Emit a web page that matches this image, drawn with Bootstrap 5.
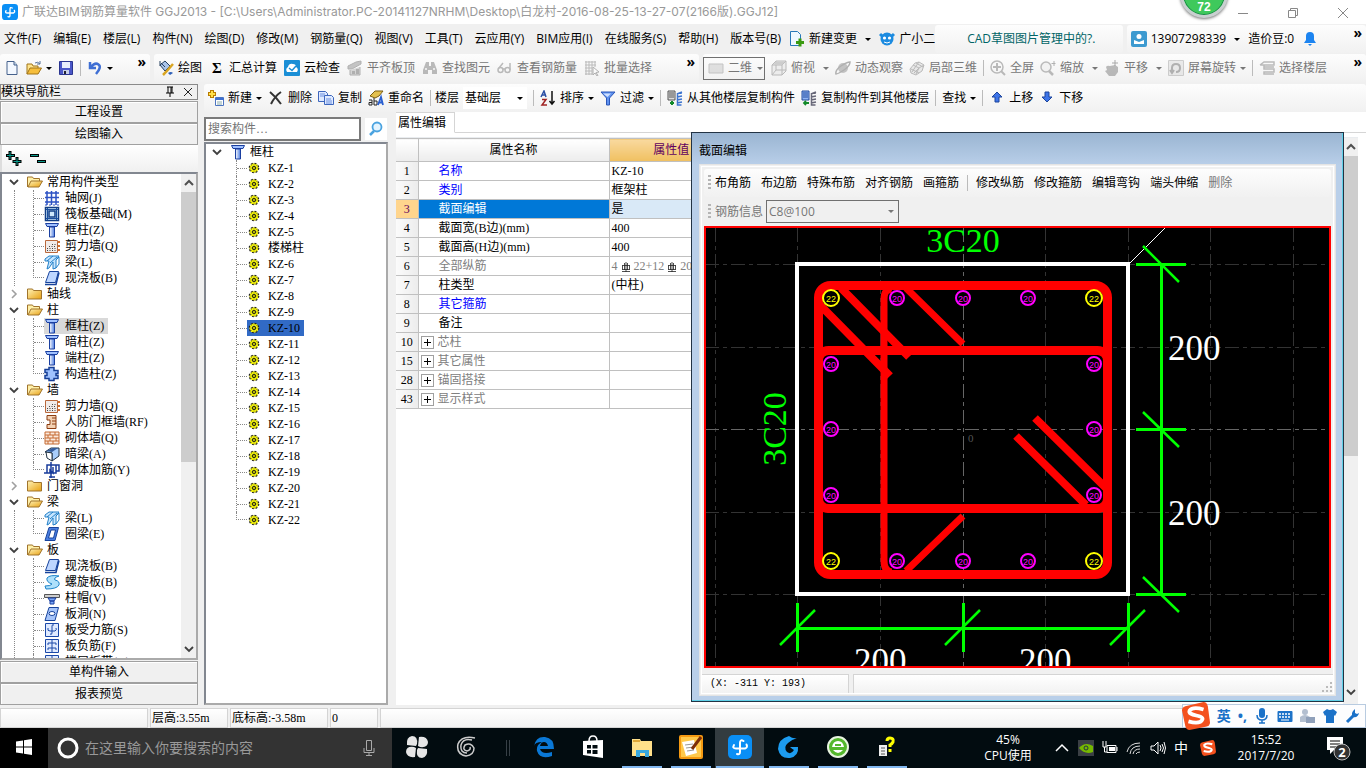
<!DOCTYPE html>
<html lang="zh-CN">
<head>
<meta charset="utf-8">
<meta name="viewport" content="width=device-width, initial-scale=1">
<title>广联达BIM钢筋算量软件 GGJ2013</title>
<link href="https://cdn.jsdelivr.net/npm/bootstrap@5.3.0/dist/css/bootstrap.min.css" rel="stylesheet">
<script defer src="https://cdn.jsdelivr.net/npm/bootstrap@5.3.0/dist/js/bootstrap.bundle.min.js"></script>
<style>
:root{--ui:"Open Sans","Noto Sans CJK SC",sans-serif;--song:"Liberation Serif","Noto Sans CJK SC",serif}
body{font:12px/16px var(--ui);color:#000;background:#f0f0f0;height:100vh;overflow:hidden}
button,select,input{font:inherit;color:inherit}
a{color:inherit;text-decoration:none}
main,.shrinkable{min-height:0;min-width:0}
.song{font-family:var(--song)}
.uifont{font-family:var(--ui)}
.mono-s{font:10px/16px "Liberation Mono",monospace}
.ic{width:16px;height:16px;flex:none;display:block}
.dim{color:#777}
.dim .ic{filter:grayscale(1);opacity:.55}
.dim .live .ic{filter:none;opacity:1}
.g6{gap:6px}.g7{gap:7px}.g8{gap:8px}.g10{gap:10px}.g12{gap:12px}
.titlebar{height:24px;background:#fff;color:#999;padding-left:2px;font-family:Inter,"Noto Sans CJK SC",sans-serif}
.titlebar .winbtn{width:46px;height:24px;border:0;background:none;padding:0}
.menubar{height:30px}
.menubar .nav-link{padding:0;color:#000;line-height:16px}
.strip{background:linear-gradient(#fdfdfd,#f1f1f1);border-radius:3px;height:28px}
.w-news{width:188px;color:#006466}
.w-user{width:240px}
.w-file{width:150px}
.w-draw{width:545px}
.row-tools{height:30px}
.tbtn{border:0;background:none;padding:0;display:flex;align-items:center;gap:4px;white-space:nowrap;border-radius:0}
.sigma{width:16px;font:700 15px/16px "Liberation Serif",serif;text-align:center}
.caret{border:3px solid transparent;border-top-color:currentColor;border-bottom:0;flex:none;display:block}
.vsep{width:1px;height:16px;background:#bbb;flex:none}
.more{font-size:14px;font-weight:700;line-height:12px;align-self:flex-start;margin-top:2px;border:0;background:none;padding:0}
.flatsel{appearance:none;border:0;background:none;padding:0;outline:0}
.boxsel{border:1px solid #707070;height:23px;display:flex;align-items:center}
.boxsel.view{width:62px}
.boxsel.view select{width:26px}
.boxsel.info{width:133px;padding:0 4px 0 2px}
.floorsel{height:22px;width:64px;padding:0 4px 0 2px;background:#fff}
.side{width:198px}
.side-head{height:16px;border:1px solid #8a8a8a;line-height:14px}
.side-btn{height:22px;border:1px solid #a0a0a0;border-radius:0;background:#f0f0f0;box-shadow:inset 1px 1px #fff;padding:0;line-height:18px;width:100%;flex:none}
.side-head + .side-btn,.treebox + .side-btn{margin-top:1px}
.side-tools{height:27px;background:linear-gradient(#fff,#f0f0f0);border-left:2px solid #ddd}
.treebox{border:2px solid #828790;border-right-color:#aaa;border-bottom-color:#aaa;background:#fff;overflow:hidden;min-height:0}
.tree,.tree ul{list-style:none;margin:0;padding:0;min-width:0}
.trow{height:16px;display:flex;align-items:center;white-space:nowrap;padding-left:7px}
.chev{width:10px;height:10px;flex:none}
.tree ul{margin-left:12px;border-left:1px dotted #888}
.tree ul>li{height:16px;margin-left:18px;border-left:1px dotted #888;display:flex;align-items:center;white-space:nowrap}
.tree ul>li::before{content:"";width:10px;border-top:1px dotted #888;flex:none}
.tree ul>li:last-child{border-left-color:transparent}
.tree ul>li:last-child::before{border:0;border-left:1px dotted #888;border-bottom:1px dotted #888;height:8px;align-self:flex-start;margin-left:-1px;width:11px}
.node{display:flex;align-items:center;height:16px;gap:5px;padding:0 4px 0 0}
.node.on{background:#d9d9d9}
.parts .trow{padding-left:6px}
.parts ul{margin-left:30px;border:0}
.parts ul>li{margin-left:0}
.parts .node.sel{background:#316ac5}
.sbar{width:15px;background:#f0f0f0;flex:none}
.sbar .thumb{background:#cdcdcd;width:100%}
.thumb.t1{height:270px}
.thumb.t2{height:300px}
.work{margin-left:2px;min-width:0}
.mid{width:184px}
.search-row{height:30px}
.search-in{border:2px solid #7a7a7a;height:24px;width:157px;padding:0 2px;background:#fff}
.search-go{background:#fff;padding:3px}
.tabline{height:21px;border-bottom:1px solid #d5d5d5}
.tabitem{background:#fff;border:1px solid #d5d5d5;border-left:0;border-bottom-color:#fff;height:21px;width:59px;line-height:18px;padding:0 2px;border-radius:0;text-align:left}
.grid-t{border-collapse:collapse;width:338px;table-layout:fixed;margin:0}
.grid-t .c1{width:22px}.grid-t .c2{width:191px}
.grid-t th,.grid-t td{height:19px;line-height:16px;border:1px solid #c0c0c0;border-left:0;padding:0;font-weight:400;vertical-align:middle}
.grid-t thead th{height:23px;text-align:center;background:linear-gradient(#fff,#ececec)}
.grid-t thead th.hot{background:linear-gradient(#f9d99f,#f0c060);color:#600060}
.grid-t tbody th{text-align:center;background:linear-gradient(90deg,#fbfbfb,#ececec)}
.grid-t td{padding-left:2px}
.grid-t td.nm{padding-left:20px}
.grid-t td.grp{padding-left:2px;color:#808080}
.grid-t .cur th{background:#ffd58d;color:#600060}
.grid-t .cur td{background:#d9e9f7}
.grid-t .cur td.nm{background:#0078d7;color:#fff}
.blue{color:#00f}
.gry{color:#808080}
.plus{width:13px;height:13px;border:1px solid #a0a0a0;background:#fff;padding:0;line-height:0;display:inline-flex;align-items:center;justify-content:center;margin-right:4px;vertical-align:-1px}
.dlg{position:absolute;top:20px;left:295px;right:22px;bottom:3px;border:1px solid #234;background:linear-gradient(#9ab5d2,#b9cfe9 32px);box-shadow:inset -1px -1px #5fd0e8;padding:0 7px 5px}
.dlg-title{height:31px;padding-top:10px}
.dlg-in{background:#f0f0f0;border:1px solid #e4e4e4;outline:1px solid #fff;outline-offset:-3px;padding:4px 4px 0}
.dlg-tools{gap:10px;padding-left:4px}
.dlg-tools .grip{margin-right:-6px}
.dlg-tools .vsep{margin:0 -2px}
.dlg-info{height:29px;padding-left:4px}
.dlg-info label{width:55px;padding-left:4px}
.dlg-foot{margin:6px -3px 1px}
.dlg-foot .pos{width:148px;padding-left:8px}
.grip{width:3px;height:16px;background:repeating-linear-gradient(#b5b5b5 0 2px,transparent 2px 4px);flex:none}
.cad{background:#000;border:2px solid #f00;overflow:hidden}
.cad svg{width:100%;height:100%;display:block}
.cell{border:1px solid #d4d4d4;background:linear-gradient(#fff,#f2f2f2);height:20px;line-height:18px;padding-left:1px}
.statusbar{height:20px;margin-top:3px;gap:2px}
.cw1{width:148px}.cw2{width:78px}.cw3{width:98px}.cw4{width:48px}
.ime{position:absolute;right:0;bottom:0;height:24px;background:#fdfdfe;border:1px solid #b8cbe0;width:184px;color:#1c72c8;font:700 14px/16px var(--ui)}
.ime .logo-s{width:28px;height:28px;margin-left:-1px}
.badge72{position:absolute;left:1180px;top:-30px;width:48px;height:48px;border-radius:50%;background:#3fc95c;border:3px solid #c9cfd0;box-shadow:0 1px 3px #777,inset 0 0 0 1px #168a44;color:#fff;font:700 12px/16px "Liberation Sans",sans-serif;padding-top:26px;text-align:center}
.taskbar{height:40px;background:#020c10;color:#fff}
.taskbar .tile{width:49px;height:40px;border:0;background:none;padding:0 0 2px;display:flex;align-items:center;justify-content:center;flex:none;color:#fff}
.taskbar .tile.start{width:48px;background:#000}
.taskbar .tile.note{width:54px}
.tile.run{background:linear-gradient(#82b8f0,#82b8f0) center bottom/40px 2px no-repeat!important}
.tile.act{background:linear-gradient(#82b8f0,#82b8f0) center bottom/48px 2px no-repeat,#333c40!important}
.tile .ic{width:24px;height:24px}
.tsplit{width:4px;height:16px;margin:0 9px;opacity:.5}
.tsearch{width:344px;background:#333}
.tsearch .ringo{margin:0 5px 0 8px}
.tsearch input{background:none;border:0;color:#999;font-size:14px;outline:0;padding:0}
.tsearch input::placeholder{color:#999;opacity:1}
.tray .cpu{width:60px}
.tray .clock{width:76px}
.tray .zh{font-size:14px}
</style>
</head>
<body class="d-flex flex-column">
<svg width="0" height="0" class="position-absolute" aria-hidden="true">
<defs>
<linearGradient id="gb" x2="1"><stop stop-color="#fff"/><stop offset="1" stop-color="#4a7be0"/></linearGradient>
<linearGradient id="gf" x2="1" y2="1"><stop stop-color="#fff3b8"/><stop offset="1" stop-color="#e8a010"/></linearGradient>
<symbol id="app" viewBox="0 0 24 24"><rect width="24" height="24" rx="5" fill="#0a8ff5"/><path d="M15.500 6q-3.500-2-3.500 2v9q0 3-3 2M6 10q-2 3.500 2 3.500h9q3-1 1.500-4" fill="none" stroke="#fff" stroke-width="2" stroke-linecap="round"/></symbol>
<symbol id="new" viewBox="0 0 16 16"><path d="M3 1.500h7l3 3.500v9.500H3z" fill="#f3f8ff" stroke="#45618c"/><path d="M10 1.500V5h3" fill="#cde" stroke="#45618c"/></symbol>
<symbol id="open" viewBox="0 0 16 16"><path d="M1 14V4h5l1 2h5v3" fill="#ffe48c" stroke="#a07418"/><path d="M1 14l3-6h11.500l-3.500 6z" fill="#f6be3c" stroke="#a07418"/><path d="M9 3q3-2 5 1m0-3v3h-3" fill="none" stroke="#58749c"/></symbol>
<symbol id="save" viewBox="0 0 16 16"><path d="M1.500 1.500h13v13h-13z" fill="#4b57c8" stroke="#2a3590"/><path d="M4 2h8v6H4z" fill="#e8eefc"/><path d="M5 10h6v4H5z" fill="#c8d0e8"/><path d="M6 11h2v3H6z" fill="#223"/></symbol>
<symbol id="undo" viewBox="0 0 16 16"><path d="M3 2v6h6M4 7q4-5 7.500-2.500T9 14" fill="none" stroke="#3f6fd4" stroke-width="2.500"/></symbol>
<symbol id="draw" viewBox="0 0 16 16"><path d="M2 5l5-4 5 5-5 5z" fill="#a9c3e8" stroke="#27405f"/><path d="M2 1v5M3 3l4 4" stroke="#27405f"/><path d="M15 4L8 12l-3 3" stroke="#d9a521" stroke-width="2.500"/><path d="M10 13q3-2 5 0l-3 2z" fill="#2d5fb8"/></symbol>
<symbol id="cloud" viewBox="0 0 16 16"><rect width="16" height="16" rx="1" fill="#1b8fd6"/><path d="M3 12q-2-3 1-5 1-4 5-3 3 0 3 3 3 2 1 5z" fill="#fff"/><path d="M5 8l3 2.500L12 6" fill="none" stroke="#1b8fd6" stroke-width="1.500"/></symbol>
<symbol id="slab" viewBox="0 0 16 16"><path d="M1 6l8-4 5-1v3L5 9H1z" fill="#999" stroke="#777"/><path d="M3 10v5h10V7" fill="#bbb" stroke="#777"/><path d="M5 11h3v3H5zM9 9h3v5H9z" fill="#777"/></symbol>
<symbol id="bino" viewBox="0 0 16 16"><path d="M4 2h3v4h2V2h3l3 8v4h-5v-4H6v4H1v-4z" fill="#888"/><path d="M3 9h2M11 9h2" stroke="#ddd" stroke-width="2"/></symbol>
<symbol id="glass" viewBox="0 0 16 16"><g fill="none" stroke="#888" stroke-width="1.500"><circle cx="3.500" cy="10" r="2.500"/><circle cx="10.500" cy="10" r="2.500"/><path d="M6 9h2M2 8l4-5M13 10V3"/></g></symbol>
<symbol id="batch" viewBox="0 0 16 16"><path d="M1 2h11M1 5h11M1 8h7M1 11h7M1 14h7M2 1v14M5 1v14M8 1v14M11 1v6" stroke="#888"/><path d="M9 7l6 5-3 .500 2 3-1 .500-2-3-2 2z" fill="#fff" stroke="#777"/></symbol>
<symbol id="flat" viewBox="0 0 16 16"><path d="M1 4h14v9H1z" fill="#ccc" stroke="#999"/></symbol>
<symbol id="cube" viewBox="0 0 16 16"><path d="M1 5l4-4h10v10l-4 4H1z" fill="#e5e5e5" stroke="#888"/><path d="M1 5h10v10M11 5l4-4M5 1v9h10M5 10l-4 5" fill="none" stroke="#888"/><path d="M2 5l3-3.500h9L11 5z" fill="#aaa"/></symbol>
<symbol id="orbit" viewBox="0 0 16 16"><circle cx="8" cy="8" r="5" fill="#999"/><path d="M1 14Q0 10 6 6t9-4q0 4-6 8t-8 4z" fill="none" stroke="#777" stroke-width="1.500"/></symbol>
<symbol id="part3" viewBox="0 0 16 16"><path d="M1 9l5-6 4-1 5 3-2 6-6 4-5-2z" fill="#ddd" stroke="#888"/><path d="M4 5l6 3-3 6M10 2L7 6l-4 6M15 5l-5 3-5 5M7 3l7 4M2 9l8 4" fill="none" stroke="#888"/></symbol>
<symbol id="full" viewBox="0 0 16 16"><circle cx="7" cy="7" r="6" fill="none" stroke="#888" stroke-width="1.500"/><path d="M7 3v8M3 7h8M11 11l4 4" stroke="#888" stroke-width="2"/></symbol>
<symbol id="zoomi" viewBox="0 0 16 16"><circle cx="6" cy="7" r="5" fill="#eee" stroke="#888" stroke-width="1.500"/><path d="M9 11l4 4" stroke="#888" stroke-width="2.500"/><path d="M14 1v5M11.500 3.500h4" stroke="#777"/></symbol>
<symbol id="pan" viewBox="0 0 16 16"><path d="M2 7q1-2 4-1l5-1 3 2v5l-3 4H5l-4-5 2-1z" fill="#888"/><path d="M11 0v6M8 3h6" stroke="#666"/></symbol>
<symbol id="rot" viewBox="0 0 16 16"><path d="M.500.500h15v15H.500z" fill="#ddd" stroke="#aaa"/><path d="M4 13V8q0-4 4-4t4 4-4 4M6 10l-2 3-2-3" fill="none" stroke="#777" stroke-width="2"/></symbol>
<symbol id="floor" viewBox="0 0 16 16"><path d="M1 5l4-3h10v3H5v2h10M5 7v2h10v3H5v2h10M1 5h4" fill="none" stroke="#888" stroke-width="1.500"/></symbol>
<symbol id="add" viewBox="0 0 16 16"><path d="M4 0v8M0 4h8" stroke="#b87b00" stroke-width="4"/><path d="M4 1v6M1 4h6" stroke="#ffdf4a" stroke-width="2"/><path d="M7.500 7.500h8v8h-8z" fill="#fff" stroke="#4c74c0"/><path d="M7 9h9" stroke="#3d6fd0" stroke-width="2"/><path d="M9 12h5M9 14h5" stroke="#8aa"/></symbol>
<symbol id="del" viewBox="0 0 16 16"><path d="M2 2q6 5 11 12M13 2Q7 6 3 14" fill="none" stroke="#333" stroke-width="2"/></symbol>
<symbol id="copy" viewBox="0 0 16 16"><path d="M.500 1.500h7l2 2v8h-9z" fill="#dfeaff" stroke="#3d66bd"/><path d="M6.500 5.500h7l2 2v7h-9z" fill="#dfeaff" stroke="#3d66bd"/><path d="M2 4h5M2 6h4M8 9h5M8 11h6M8 13h6" stroke="#6a8fe0"/></symbol>
<symbol id="ren" viewBox="0 0 16 16"><path d="M2 6L7 1h8l-4 5-4 2z" fill="#e3c04e" stroke="#7b5d12"/><path d="M1 10h3v5H1v-2.500h3M6 8v7h3v-4H6" fill="none" stroke="#222"/><path d="M10 15l3-8 2 8M11 12.500h4" stroke="#2a5fd0" stroke-width="1.800" fill="none"/></symbol>
<symbol id="sort" viewBox="0 0 16 16"><path d="M1 7l3-6 2 6M2 5h4" fill="none" stroke="#2c50a5" stroke-width="1.500"/><path d="M2 9.500h4L2 15h5" fill="none" stroke="#a02424" stroke-width="1.500"/><path d="M12 1v12M9.500 11l2.500 3 2.500-3" fill="none" stroke="#111" stroke-width="1.500"/></symbol>
<symbol id="filt" viewBox="0 0 16 16"><path d="M1 2h14L9.500 8v7h-3V8z" fill="#5f92f0" stroke="#2b56b8"/><path d="M3 3.500h8L7.500 7z" fill="#cfe0ff"/></symbol>
<symbol id="bld" viewBox="0 0 16 16"><path d="M1 1h7v9H1z" fill="#ddd" stroke="#555"/><path d="M2 3h5M2 5h5M2 7h5" stroke="#555"/><path d="M10 4l5-2M10 7l5-1M10 10l5-1M10 13l5-1M10.500 3v12h4M14 3v1" stroke="#3b73cf" stroke-width="1.500" fill="none"/><path d="M5 11v4M3 13h4" stroke="#138a2a" stroke-width="2" fill="none"/></symbol>
<symbol id="bld2" viewBox="0 0 16 16"><path d="M1 1h7v9H1z" fill="#8fb4f4" stroke="#234a9c"/><path d="M2 3h5M2 5h5M2 7h5" stroke="#234a9c"/><path d="M10 4l5-2M10 7l5-1M10 10l5-1M10 13l5-1M10.500 3v12h4M14 3v1" stroke="#667" stroke-width="1.500" fill="none"/><path d="M3 13h5M5 11l-2 2 2 2" stroke="#138a2a" stroke-width="1.800" fill="none"/></symbol>
<symbol id="up" viewBox="0 0 16 16"><path d="M8 2l5 5h-3v5H6V7H3z" fill="#3d74e8" stroke="#1c459c"/></symbol>
<symbol id="dn" viewBox="0 0 16 16"><path d="M8 12l5-5h-3V2H6v5H3z" fill="#3d74e8" stroke="#1c459c"/></symbol>
<symbol id="fo" viewBox="0 0 16 16"><path d="M.500 13V3h5l1 1.500h6V7" fill="#fff0a8" stroke="#a0742c"/><path d="M1 13l3-6h11.500L12 13z" fill="url(#gf)" stroke="#a0742c"/></symbol>
<symbol id="fc" viewBox="0 0 16 16"><path d="M.500 13V3h5l1 1.500h8V13z" fill="url(#gf)" stroke="#a0742c"/></symbol>
<symbol id="axis" viewBox="0 0 16 16"><path d="M3 1v14M7.500 1v14M12 1v14M1 3h14M1 7.500h14M1 12h14" stroke="#2d52c4" stroke-width="1.500"/><path d="M1 15h14" stroke="#2d52c4" stroke-dasharray="2 2"/></symbol>
<symbol id="raft" viewBox="0 0 16 16"><path d="M1.500 1.500h13v13h-13zM5 5h6v6H5z" fill="#cfe8fb" stroke="#123e86" stroke-width="1.500"/><path d="M2 3.500h12M2 12.500h12M3.500 2v12M12.500 2v12" stroke="#1b4f9e"/></symbol>
<symbol id="col" viewBox="0 0 16 16"><path d="M1.500 1.500h13l-1.500 3H3z" fill="#9fc0ff" stroke="#1a3fa0"/><path d="M5.500 5h5v10h-5z" fill="url(#gb)" stroke="#1a3fa0"/></symbol>
<symbol id="wall" viewBox="0 0 16 16"><path d="M1.500 2.500h12v12h-12z" fill="#f1ebe8" stroke="#b9683c"/><path d="M3 12.500h9M3 10.500h9M5 8.500h7M8 6.500h4" stroke="#444" stroke-dasharray="1 1.500"/><path d="M14 4h2M14 8h2M14 12h2" stroke="#d07030" stroke-width="2"/></symbol>
<symbol id="beam" viewBox="0 0 16 16"><path d="M1 5l4-3h10l-3 4v8l-3 1V8l-4 6-2 1 2-8H1z" fill="#c5e5ff" stroke="#2380c8"/><path d="M3 7l6-5M6 9l7-6M12 6l3-3v7l-3 4" fill="none" stroke="#2380c8"/></symbol>
<symbol id="plate" viewBox="0 0 16 16"><path d="M5.500 1.500h9l-3 11h-10z" fill="#bdd6ff" stroke="#17439c"/><path d="M1 14.500h11l3-12" fill="none" stroke="#17439c" stroke-width="1.500"/></symbol>
<symbol id="gz" viewBox="0 0 16 16"><path d="M5 1.500h5v3h4v3h-2v2h2v3h-4v2H5v-2H1v-3h2v-3H1v-3h4z" fill="#9fc2ff" stroke="#173f96" stroke-width="1.500"/></symbol>
<symbol id="rf" viewBox="0 0 16 16"><path d="M3 1.500h9v13H3v-4h3V6H3z" fill="#f3d2b4" stroke="#8c3c10"/><path d="M8 4h4M8 7h4M8 10h4" stroke="#8c3c10"/></symbol>
<symbol id="brick" viewBox="0 0 16 16"><path d="M1 2h14v12H1z" fill="#fbe9dc" stroke="#c56a33"/><path d="M1 5h14M1 8h14M1 11h14M6 2v3M11 2v3M4 5v3M9 5v3M6 8v3M12 8v3M4 11v3M9 11v3" stroke="#c56a33"/></symbol>
<symbol id="hb" viewBox="0 0 16 16"><path d="M1 6l6-4h8v8l-7 5V7z" fill="#a8cdfb" stroke="#234"/><path d="M2 6l6 1v8l-5-3z" fill="#fff" stroke="#234"/><path d="M2 5l7-3h5L8 6z" fill="#345c9c"/></symbol>
<symbol id="jj" viewBox="0 0 16 16"><path d="M3 3h9v8H3zM0 11h6v-3l3 3V5M7 0v16M12 3h3v6h-3M5 15h6" fill="none" stroke="#183c9c" stroke-width="1.500"/></symbol>
<symbol id="ring" viewBox="0 0 16 16"><path d="M5 1.500h9.500l-3.500 13H1z" fill="#4a7ee0" stroke="#17439c"/><path d="M7 4h4.500l-2 8H4.500z" fill="#fff" stroke="#17439c"/></symbol>
<symbol id="spir" viewBox="0 0 16 16"><path d="M3 4Q6 .5 15 2q-6 2-4 4 5 1 4 5-2 4-13 4l-1-3q6 0 7-2-6-2-5-6z" fill="#aee0fb" stroke="#1d83c9"/></symbol>
<symbol id="cap" viewBox="0 0 16 16"><path d="M.500 4.500h15v3H.500z" fill="#ccc" stroke="#555"/><path d="M4 8h8l-2 3H6zM6 11h4v3H6z" fill="#7aa8f8" stroke="#1a3fa0"/></symbol>
<symbol id="hole" viewBox="0 0 16 16"><path d="M5 1.500h9.500l-3.500 13H1z" fill="#a5c4fa" stroke="#17439c"/><ellipse cx="8" cy="7.500" rx="3" ry="2" fill="#fff" stroke="#17439c"/></symbol>
<symbol id="sl" viewBox="0 0 16 16"><path d="M1.500 1.500h13v13h-13z" fill="#dfeaff" stroke="#1a48a8"/><path d="M4 6q-1 3 2 3h5q2-1 1-3M10 3q-2-1-2 1v7q0 2-2 1" stroke="#1a48a8" fill="none"/></symbol>
<symbol id="fj" viewBox="0 0 16 16"><path d="M1.500 1.500h13v13h-13z" fill="#dfeaff" stroke="#1a48a8"/><path d="M4 7V5h8v2M4 12v-2h8v2M8 2v12" fill="none" stroke="#1a48a8"/></symbol>
<symbol id="gear" viewBox="-1 -2 16 16"><circle cx="6" cy="6" r="4.700" fill="#ff0" stroke="#222" stroke-width="1.300" stroke-dasharray="1.850 1.850"/><path d="M6 1v10M1 6h10M2.500 2.500l7 7M9.500 2.500l-7 7" stroke="#554" stroke-width=".5"/><circle cx="6" cy="6" r="1.500" fill="#ff0" stroke="#111"/></symbol>
<symbol id="cd" viewBox="0 0 10 10"><path d="M1 3l4 4 4-4" fill="none" stroke="#404040" stroke-width="1.800"/></symbol>
<symbol id="cr" viewBox="0 0 10 10"><path d="M3 1l4 4-4 4" fill="none" stroke="#a0a0a0" stroke-width="1.600"/></symbol>
<symbol id="cu" viewBox="0 0 10 10"><path d="M1 7l4-4 4 4" fill="none" stroke="#505050" stroke-width="2"/></symbol>
<symbol id="bar3" viewBox="0 0 10 11"><path d="M1.500 3.500h7M1.500 7.500h7M1.500 3v5M8.500 3v5M3.500 1v7M6.500 1v7M5 0v10M1 9.500h8" fill="none" stroke="#222" stroke-width=".8"/></symbol>
<symbol id="sogou" viewBox="0 0 26 26"><path d="M3 4l17-4q3 0 4 4l2 15q0 3-4 4L7 26q-3 0-4-4L0 8q0-3 3-4z" fill="#f4511e"/><path d="M20 7q-10-3-13 1c-2 5 13 4 12 8q-2 5-13 2" fill="none" stroke="#fff" stroke-width="3.500"/></symbol>
</defs></svg>

<header class="titlebar d-flex align-items-center gap-1 flex-shrink-0">
 <svg class="ic"><use href="#app"/></svg><span class="flex-fill text-nowrap">广联达BIM钢筋算量软件 GGJ2013 - [C:\Users\Administrator.PC-20141127NRHM\Desktop\白龙村-2016-08-25-13-27-07(2166版).GGJ12]</span>
 <button class="winbtn" aria-label="最小化"><svg width="12" height="12"><path d="M1 6.500h10" stroke="#888"/></svg></button><button class="winbtn" aria-label="还原"><svg width="12" height="12"><path d="M1.500 3.500h7v7h-7zM3.500 3.500v-2h7v7h-2" fill="none" stroke="#888"/></svg></button><button class="winbtn" aria-label="关闭"><svg width="12" height="12"><path d="M1 1l10 10M11 1L1 11" stroke="#888"/></svg></button>
</header>
<div class="badge72">72</div>

<nav class="menubar d-flex align-items-center flex-shrink-0 text-nowrap">
 <div class="d-flex align-items-center ps-1 flex-fill gap-2">
  <div class="nav flex-nowrap g12">
  <a class="nav-link" href="#">文件(F)</a><a class="nav-link" href="#">编辑(E)</a><a class="nav-link" href="#">楼层(L)</a><a class="nav-link" href="#">构件(N)</a><a class="nav-link" href="#">绘图(D)</a><a class="nav-link" href="#">修改(M)</a><a class="nav-link" href="#">钢筋量(Q)</a><a class="nav-link" href="#">视图(V)</a><a class="nav-link" href="#">工具(T)</a><a class="nav-link" href="#">云应用(Y)</a><a class="nav-link" href="#">BIM应用(I)</a><a class="nav-link" href="#">在线服务(S)</a><a class="nav-link" href="#">帮助(H)</a><a class="nav-link" href="#">版本号(B)</a></div>
  <button class="tbtn"><svg class="ic" viewBox="0 0 16 16"><path d="M1.500.500h7l3 3v11h-10z" fill="#eef8ff" stroke="#2778b8"/><path d="M11 7.500v8M7 11.500h8" stroke="#3a9a10" stroke-width="3"/></svg>新建变更<span class="caret ms-1"></span></button>
  <button class="tbtn"><svg class="ic" viewBox="0 0 16 16"><circle cx="8" cy="8" r="6.500" fill="#1c8be0"/><path d="M1 3l3 3M15 3l-3 3" stroke="#1c8be0" stroke-width="3"/><circle cx="5.500" cy="7" r="1.600" fill="#fff"/><circle cx="10.500" cy="7" r="1.600" fill="#fff"/><path d="M5 11q3 2 6 0" stroke="#fff" fill="none"/></svg>广小二</button>
 </div>
 <div class="strip w-news d-flex align-items-center ps-4"><a href="#" class="ps-2">CAD草图图片管理中的?.</a></div>
 <div class="strip w-user d-flex align-items-center gap-2 ps-1 ms-1"><button class="tbtn"><svg class="ic" viewBox="0 0 16 16"><rect width="16" height="16" rx="2" fill="#3d9ad0"/><circle cx="8" cy="5.500" r="2.500" fill="#fff"/><path d="M3 13V9l5 2 5-2v4z" fill="#fff"/></svg>13907298339<span class="caret ms-1"></span></button><span>造价豆:0</span><svg class="ic" viewBox="0 0 16 16"><path d="M2 12l2-3V5q0-4 4-4t4 4v4l2 3zM6 13h4l-2 2z" fill="#1c84f0"/></svg><button class="more ms-auto me-1" aria-label="更多">»</button></div>
</nav>

<div class="row-tools d-flex flex-shrink-0">
 <div class="strip w-file d-flex align-items-center ps-1 pe-1 g6"><button class="tbtn" aria-label="新建"><svg class="ic"><use href="#new"/></svg></button><button class="tbtn g8" aria-label="打开"><svg class="ic"><use href="#open"/></svg><span class="caret"></span></button><button class="tbtn" aria-label="保存"><svg class="ic"><use href="#save"/></svg></button><span class="vsep"></span><button class="tbtn g8" aria-label="撤销"><svg class="ic"><use href="#undo"/></svg><span class="caret"></span></button><button class="more ms-auto" aria-label="更多">»</button></div>
 <div class="strip w-draw d-flex align-items-center ms-1 ps-1 pe-1 g7 dim"><button class="tbtn live text-black"><svg class="ic"><use href="#draw"/></svg>绘图</button><button class="tbtn text-black"><span class="sigma">Σ</span>汇总计算</button><button class="tbtn live text-black"><svg class="ic"><use href="#cloud"/></svg>云检查</button><button class="tbtn"><svg class="ic"><use href="#slab"/></svg>平齐板顶</button><button class="tbtn"><svg class="ic"><use href="#bino"/></svg>查找图元</button><button class="tbtn"><svg class="ic"><use href="#glass"/></svg>查看钢筋量</button><button class="tbtn"><svg class="ic"><use href="#batch"/></svg>批量选择</button><button class="more ms-auto text-black" aria-label="更多">»</button></div>
 <div class="strip d-flex align-items-center ms-1 dim flex-fill pe-1 g6"><div class="boxsel view gap-1 px-1"><svg class="ic"><use href="#flat"/></svg><select class="flatsel dim" aria-label="视图模式"><option>二维</option></select><span class="caret"></span></div><button class="tbtn"><svg class="ic"><use href="#cube"/></svg>俯视<span class="caret ms-1"></span></button><button class="tbtn"><svg class="ic"><use href="#orbit"/></svg>动态观察</button><button class="tbtn"><svg class="ic"><use href="#part3"/></svg>局部三维</button><span class="vsep"></span><button class="tbtn"><svg class="ic"><use href="#full"/></svg>全屏</button><button class="tbtn"><svg class="ic"><use href="#zoomi"/></svg>缩放<span class="caret ms-1"></span></button><button class="tbtn"><svg class="ic"><use href="#pan"/></svg>平移<span class="caret ms-1"></span></button><button class="tbtn"><svg class="ic"><use href="#rot"/></svg>屏幕旋转<span class="caret"></span></button><span class="vsep"></span><button class="tbtn"><svg class="ic"><use href="#floor"/></svg>选择楼层</button><button class="more ms-auto text-black" aria-label="更多">»</button></div>
</div>

<main class="d-flex flex-fill">
<aside class="side d-flex flex-column flex-shrink-0 song">
 <div class="side-head d-flex align-items-center flex-shrink-0"><span class="flex-fill">模块导航栏</span><svg width="10" height="12" viewBox="0 0 10 12"><path d="M2 1h6M3 1v6M7 1v6M6 1v6M1 7h8M5 7v4" stroke="#000"/></svg><button class="tbtn ms-2 me-1" aria-label="关闭面板"><svg width="10" height="10"><path d="M1 1l8 8M9 1L1 9" stroke="#222"/></svg></button></div>
 <button class="side-btn">工程设置</button>
 <button class="side-btn">绘图输入</button>
 <div class="side-tools d-flex align-items-center ps-1 gap-2 flex-shrink-0"><button class="tbtn" aria-label="全部展开"><svg class="ic" viewBox="0 0 16 16"><path d="M4 0v9M0 4.500h9M11 6v9M6.500 10.500h9" stroke="#000" stroke-width="3"/><path d="M4 1v7M1 4.500h7M11 7v7M7.500 10.500h7" stroke="#0a9a8c"/></svg></button><button class="tbtn" aria-label="全部折叠"><svg class="ic" viewBox="0 0 16 16"><path d="M0 4.500h9M7 10.500h9" stroke="#000" stroke-width="3"/><path d="M1 4.500h7M8 10.500h7" stroke="#0a9a8c"/></svg></button></div>
 <div class="treebox d-flex flex-fill">
  <ul class="tree flex-fill">
   <li><div class="trow"><svg class="chev me-2"><use href="#cd"/></svg><svg class="ic me-1"><use href="#fo"/></svg>常用构件类型</div><ul><li><span class="node"><svg class="ic"><use href="#axis"/></svg>轴网(J)</span></li><li><span class="node"><svg class="ic"><use href="#raft"/></svg>筏板基础(M)</span></li><li><span class="node"><svg class="ic"><use href="#col"/></svg>框柱(Z)</span></li><li><span class="node"><svg class="ic"><use href="#wall"/></svg>剪力墙(Q)</span></li><li><span class="node"><svg class="ic"><use href="#beam"/></svg>梁(L)</span></li><li><span class="node"><svg class="ic"><use href="#plate"/></svg>现浇板(B)</span></li></ul></li>
   <li><div class="trow"><svg class="chev me-2"><use href="#cr"/></svg><svg class="ic me-1"><use href="#fc"/></svg>轴线</div></li>
   <li><div class="trow"><svg class="chev me-2"><use href="#cd"/></svg><svg class="ic me-1"><use href="#fo"/></svg>柱</div><ul><li><span class="node on"><svg class="ic"><use href="#col"/></svg>框柱(Z)</span></li><li><span class="node"><svg class="ic"><use href="#col"/></svg>暗柱(Z)</span></li><li><span class="node"><svg class="ic"><use href="#col"/></svg>端柱(Z)</span></li><li><span class="node"><svg class="ic"><use href="#gz"/></svg>构造柱(Z)</span></li></ul></li>
   <li><div class="trow"><svg class="chev me-2"><use href="#cd"/></svg><svg class="ic me-1"><use href="#fo"/></svg>墙</div><ul><li><span class="node"><svg class="ic"><use href="#wall"/></svg>剪力墙(Q)</span></li><li><span class="node"><svg class="ic"><use href="#rf"/></svg>人防门框墙(RF)</span></li><li><span class="node"><svg class="ic"><use href="#brick"/></svg>砌体墙(Q)</span></li><li><span class="node"><svg class="ic"><use href="#hb"/></svg>暗梁(A)</span></li><li><span class="node"><svg class="ic"><use href="#jj"/></svg>砌体加筋(Y)</span></li></ul></li>
   <li><div class="trow"><svg class="chev me-2"><use href="#cr"/></svg><svg class="ic me-1"><use href="#fc"/></svg>门窗洞</div></li>
   <li><div class="trow"><svg class="chev me-2"><use href="#cd"/></svg><svg class="ic me-1"><use href="#fo"/></svg>梁</div><ul><li><span class="node"><svg class="ic"><use href="#beam"/></svg>梁(L)</span></li><li><span class="node"><svg class="ic"><use href="#ring"/></svg>圈梁(E)</span></li></ul></li>
   <li><div class="trow"><svg class="chev me-2"><use href="#cd"/></svg><svg class="ic me-1"><use href="#fo"/></svg>板</div><ul><li><span class="node"><svg class="ic"><use href="#plate"/></svg>现浇板(B)</span></li><li><span class="node"><svg class="ic"><use href="#spir"/></svg>螺旋板(B)</span></li><li><span class="node"><svg class="ic"><use href="#cap"/></svg>柱帽(V)</span></li><li><span class="node"><svg class="ic"><use href="#hole"/></svg>板洞(N)</span></li><li><span class="node"><svg class="ic"><use href="#sl"/></svg>板受力筋(S)</span></li><li><span class="node"><svg class="ic"><use href="#fj"/></svg>板负筋(F)</span></li><li><span class="node"><svg class="ic"><use href="#fj"/></svg>楼层板带(H)</span></li></ul></li>
  </ul>
  <div class="sbar d-flex flex-column align-items-center justify-content-between pb-1"><div class="w-100 d-flex flex-column align-items-center"><svg class="chev my-1"><use href="#cu"/></svg><div class="thumb t1"></div></div><svg class="chev"><use href="#cd"/></svg></div>
 </div>
 <button class="side-btn">单构件输入</button>
 <button class="side-btn">报表预览</button>
</aside>

<section class="work d-flex flex-column flex-fill ps-1">
 <div class="strip d-flex align-items-center ps-1 flex-shrink-0 g6">
  <button class="tbtn"><svg class="ic"><use href="#add"/></svg>新建<span class="caret"></span></button><button class="tbtn"><svg class="ic"><use href="#del"/></svg>删除</button><button class="tbtn"><svg class="ic"><use href="#copy"/></svg>复制</button><button class="tbtn"><svg class="ic"><use href="#ren"/></svg>重命名</button><div class="d-flex align-items-center"><span class="vsep me-1"></span><label for="fl" class="me-1">楼层</label><div class="floorsel d-flex align-items-center"><select id="fl" class="flatsel flex-fill"><option>基础层</option></select><span class="caret"></span></div></div><span class="vsep"></span><button class="tbtn"><svg class="ic"><use href="#sort"/></svg>排序<span class="caret"></span></button><button class="tbtn"><svg class="ic"><use href="#filt"/></svg>过滤<span class="caret"></span></button><span class="vsep"></span><button class="tbtn"><svg class="ic"><use href="#bld"/></svg>从其他楼层复制构件</button><button class="tbtn"><svg class="ic"><use href="#bld2"/></svg>复制构件到其他楼层</button><span class="vsep"></span><button class="tbtn">查找<span class="caret"></span></button><span class="vsep"></span><button class="tbtn"><svg class="ic"><use href="#up"/></svg>上移</button><button class="tbtn"><svg class="ic"><use href="#dn"/></svg>下移</button>
 </div>
 <div class="shrinkable d-flex flex-fill">
  <div class="mid d-flex flex-column flex-shrink-0 song">
   <div class="search-row d-flex align-items-center flex-shrink-0 pt-1"><input class="search-in dim" type="text" placeholder="搜索构件…" aria-label="搜索构件"><button class="tbtn search-go ms-1" aria-label="搜索"><svg class="ic" viewBox="0 0 16 16"><circle cx="9" cy="6" r="4.500" fill="#e4f4ff" stroke="#4aa3e0" stroke-width="1.800"/><path d="M6 10l-4 4" stroke="#4aa3e0" stroke-width="2.500"/></svg></button></div>
   <div class="treebox flex-fill"><ul class="tree parts"><li><div class="trow"><svg class="chev me-2"><use href="#cd"/></svg><svg class="ic me-1"><use href="#col"/></svg>框柱</div><ul><li><span class="node"><svg class="ic"><use href="#gear"/></svg>KZ-1</span></li><li><span class="node"><svg class="ic"><use href="#gear"/></svg>KZ-2</span></li><li><span class="node"><svg class="ic"><use href="#gear"/></svg>KZ-3</span></li><li><span class="node"><svg class="ic"><use href="#gear"/></svg>KZ-4</span></li><li><span class="node"><svg class="ic"><use href="#gear"/></svg>KZ-5</span></li><li><span class="node"><svg class="ic"><use href="#gear"/></svg>楼梯柱</span></li><li><span class="node"><svg class="ic"><use href="#gear"/></svg>KZ-6</span></li><li><span class="node"><svg class="ic"><use href="#gear"/></svg>KZ-7</span></li><li><span class="node"><svg class="ic"><use href="#gear"/></svg>KZ-8</span></li><li><span class="node"><svg class="ic"><use href="#gear"/></svg>KZ-9</span></li><li><span class="node sel"><svg class="ic"><use href="#gear"/></svg>KZ-10</span></li><li><span class="node"><svg class="ic"><use href="#gear"/></svg>KZ-11</span></li><li><span class="node"><svg class="ic"><use href="#gear"/></svg>KZ-12</span></li><li><span class="node"><svg class="ic"><use href="#gear"/></svg>KZ-13</span></li><li><span class="node"><svg class="ic"><use href="#gear"/></svg>KZ-14</span></li><li><span class="node"><svg class="ic"><use href="#gear"/></svg>KZ-15</span></li><li><span class="node"><svg class="ic"><use href="#gear"/></svg>KZ-16</span></li><li><span class="node"><svg class="ic"><use href="#gear"/></svg>KZ-17</span></li><li><span class="node"><svg class="ic"><use href="#gear"/></svg>KZ-18</span></li><li><span class="node"><svg class="ic"><use href="#gear"/></svg>KZ-19</span></li><li><span class="node"><svg class="ic"><use href="#gear"/></svg>KZ-20</span></li><li><span class="node"><svg class="ic"><use href="#gear"/></svg>KZ-21</span></li><li><span class="node"><svg class="ic"><use href="#gear"/></svg>KZ-22</span></li></ul></li></ul></div>
  </div>
  <div class="shrinkable flex-fill position-relative bg-white d-flex flex-column ms-2 song">
   <div class="tabline flex-shrink-0"><button class="tabitem">属性编辑</button></div>
   <div class="shrinkable d-flex flex-fill mt-1 border-top border-secondary-subtle me-2">
    <div class="flex-fill">
    <table class="grid-t"><colgroup><col class="c1"><col class="c2"><col></colgroup>
    <thead><tr><th></th><th>属性名称</th><th class="hot">属性值</th></tr></thead>
    <tbody>
    <tr><th>1</th><td class="nm blue">名称</td><td>KZ-10</td></tr>
    <tr><th>2</th><td class="nm blue">类别</td><td>框架柱</td></tr>
    <tr class="cur"><th>3</th><td class="nm">截面编辑</td><td>是</td></tr>
    <tr><th>4</th><td class="nm">截面宽(B边)(mm)</td><td>400</td></tr>
    <tr><th>5</th><td class="nm">截面高(H边)(mm)</td><td>400</td></tr>
    <tr><th>6</th><td class="nm gry">全部纵筋</td><td class="gry">4 <svg width="10" height="11"><use href="#bar3"/></svg> 22+12 <svg width="10" height="11"><use href="#bar3"/></svg> 20</td></tr>
    <tr><th>7</th><td class="nm">柱类型</td><td>(中柱)</td></tr>
    <tr><th>8</th><td class="nm blue">其它箍筋</td><td></td></tr>
    <tr><th>9</th><td class="nm">备注</td><td></td></tr>
    <tr><th>10</th><td class="grp"><button class="plus" aria-label="展开"><svg width="9" height="9"><path d="M1 4.500h7M4.500 1v7" stroke="#000"/></svg></button>芯柱</td><td></td></tr>
    <tr><th>15</th><td class="grp"><button class="plus" aria-label="展开"><svg width="9" height="9"><path d="M1 4.500h7M4.500 1v7" stroke="#000"/></svg></button>其它属性</td><td></td></tr>
    <tr><th>28</th><td class="grp"><button class="plus" aria-label="展开"><svg width="9" height="9"><path d="M1 4.500h7M4.500 1v7" stroke="#000"/></svg></button>锚固搭接</td><td></td></tr>
    <tr><th>43</th><td class="grp"><button class="plus" aria-label="展开"><svg width="9" height="9"><path d="M1 4.500h7M4.500 1v7" stroke="#000"/></svg></button>显示样式</td><td></td></tr>
    </tbody></table></div>
    <div class="sbar d-flex flex-column align-items-center justify-content-between pb-2"><div class="w-100 d-flex flex-column align-items-center"><svg class="chev my-1"><use href="#cu"/></svg><div class="thumb t2"></div></div><svg class="chev"><use href="#cd"/></svg></div>
   </div>
   <div class="dlg uifont d-flex flex-column" role="dialog" aria-label="截面编辑">
    <div class="dlg-title flex-shrink-0">截面编辑</div>
    <div class="dlg-in shrinkable flex-fill d-flex flex-column">
     <div class="strip dlg-tools d-flex align-items-center flex-shrink-0 text-nowrap"><span class="grip"></span><button class="tbtn">布角筋</button><button class="tbtn">布边筋</button><button class="tbtn">特殊布筋</button><button class="tbtn">对齐钢筋</button><button class="tbtn">画箍筋</button><span class="vsep"></span><button class="tbtn">修改纵筋</button><button class="tbtn">修改箍筋</button><button class="tbtn">编辑弯钩</button><button class="tbtn">端头伸缩</button><button class="tbtn dim">删除</button></div>
     <div class="dlg-info d-flex align-items-center flex-shrink-0 dim"><span class="grip"></span><label for="bar">钢筋信息</label><div class="boxsel info"><select id="bar" class="flatsel flex-fill"><option>C8@100</option></select><span class="caret"></span></div></div>
     <div class="cad shrinkable flex-fill">
      <svg viewBox="705 228 625 438" preserveAspectRatio="xMidYMid slice" fill="none" font-family="Liberation Serif, serif">
       <g stroke="#333" stroke-dasharray="14 4 4 4"><path d="M715.500 228V668M797.500 228V668M880.500 228V668M1045.500 228V668M1128.500 228V668M1210.500 228V668M1293.500 228V668M705 264.500H1332M705 347.500H1332M705 512.500H1332M705 594.500H1332"/><path stroke="#666" d="M963.500 228V668M705 429.500H1332"/></g>
       <path d="M1129 264L1166 227" stroke="#fff"/>
       <rect x="797" y="264" width="331" height="330" stroke="#fff" stroke-width="4"/>
       <g stroke="#f00"><rect x="818.500" y="285.500" width="289" height="289" rx="12" stroke-width="9"/><rect x="818.500" y="350.500" width="289" height="158" rx="10" stroke-width="9"/><path stroke-width="7" d="M892 290q-8-2-8 10V560q0 12 8 12"/><path stroke-width="8" d="M819 304L890 376M841 288L909 357M1035 418L1107 489M1016 436L1086 505"/><path stroke-width="7" d="M906 288L963 344M963 516L906 571"/></g>
       <g stroke="#ff0" stroke-width="2" fill="#000"><circle cx="831" cy="298" r="8"/><circle cx="1094" cy="298" r="8"/><circle cx="831" cy="561" r="8"/><circle cx="1094" cy="561" r="8"/></g>
       <g stroke="#f0f" stroke-width="2" fill="#000"><circle cx="897" cy="298" r="7"/><circle cx="963" cy="298" r="7"/><circle cx="1028" cy="298" r="7"/><circle cx="897" cy="561" r="7"/><circle cx="963" cy="561" r="7"/><circle cx="1028" cy="561" r="7"/><circle cx="831" cy="364" r="7"/><circle cx="831" cy="429" r="7"/><circle cx="831" cy="495" r="7"/><circle cx="1094" cy="364" r="7"/><circle cx="1094" cy="429" r="7"/><circle cx="1094" cy="495" r="7"/></g>
       <g font-size="9" text-anchor="middle" font-family="Liberation Sans, sans-serif"><g fill="#ff0"><text x="831" y="302">22</text><text x="1094" y="302">22</text><text x="831" y="565">22</text><text x="1094" y="565">22</text></g><g fill="#f0f"><text x="897" y="302">20</text><text x="963" y="302">20</text><text x="1028" y="302">20</text><text x="897" y="565">20</text><text x="963" y="565">20</text><text x="1028" y="565">20</text><text x="831" y="368">20</text><text x="831" y="433">20</text><text x="831" y="499">20</text><text x="1094" y="368">20</text><text x="1094" y="433">20</text><text x="1094" y="499">20</text></g></g>
       <g stroke="#0f0" stroke-width="3"><path d="M1161.500 264V594M1136 264.500H1186M1136 429.500H1186M1136 594.500H1186M797 628.500H1128"/><path d="M797.500 603V652M963.500 603V652M1128.500 603V652"/><path stroke-width="2.500" d="M1143 246L1179 282M1143 412L1179 447M1143 577L1179 612M780 645L815 610M945 645L980 610M1110 645L1145 610"/></g>
       <g font-size="34" fill="#0f0"><text x="963" y="252" text-anchor="middle">3C20</text><text transform="translate(786 429) rotate(-90)" text-anchor="middle">3C20</text></g>
       <g font-size="35" fill="#fff"><text x="1168" y="360">200</text><text x="1168" y="525">200</text><text x="854" y="673">200</text><text x="1019" y="673">200</text></g>
       <text x="968" y="442" font-size="11" fill="#555">0</text>
      </svg></div>
     <div class="dlg-foot d-flex flex-shrink-0"><div class="cell pos mono-s">(X: -311 Y: 193)</div><div class="cell flex-fill ms-1 d-flex justify-content-end align-items-end"><svg width="12" height="12"><path d="M9 2h2M9 6h2M5 6h2M9 10h2M5 10h2M1 10h2" stroke="#bbb" stroke-width="2"/></svg></div></div>
    </div>
   </div>
  </div>
 </div>
</section>
</main>

<footer class="statusbar d-flex flex-shrink-0 position-relative song"><div class="cell cw1"></div><div class="cell cw2">层高:3.55m</div><div class="cell cw3">底标高:-3.58m</div><div class="cell cw4">0</div><div class="cell flex-fill"></div>
 <div class="ime d-flex align-items-center justify-content-between pe-1"><svg class="ic logo-s"><use href="#sogou"/></svg><span>英</span><span>•,</span><svg class="ic" viewBox="0 0 16 16"><rect x="5" y="0" width="6" height="10" rx="3" fill="#1c72c8"/><path d="M3 7q0 5 5 5t5-5M8 12v3M5 15h6" fill="none" stroke="#1c72c8" stroke-width="1.500"/></svg><svg class="ic" viewBox="0 0 16 16"><rect x=".5" y="3" width="15" height="11" rx="1" fill="#1c72c8"/><path d="M2 6h12M2 9h12" stroke="#fff" stroke-width="1.500" stroke-dasharray="2 1"/><path d="M4 12h8" stroke="#fff"/></svg><svg class="ic" viewBox="0 0 16 16"><circle cx="6" cy="4" r="3" fill="#b3bfd0"/><path d="M1 14V9q5-4 10 0v5z" fill="#b3bfd0"/><rect x="7" y="9" width="9" height="6" fill="#8fa0ba"/></svg><svg class="ic" viewBox="0 0 16 16"><path d="M1 4l4-3q3 2 6 0l4 3-2 4-1-1v8H4V7L3 8z" fill="#1c72c8"/></svg><svg class="ic" viewBox="0 0 16 16"><path d="M2 14l7-7" stroke="#1c72c8" stroke-width="3"/><path d="M14 5q-1 5-6 4-3-4 2-8l0 4 2 1z" fill="#1c72c8"/></svg></div>
</footer>

<div class="taskbar d-flex align-items-stretch flex-shrink-0">
 <button class="tile start" aria-label="开始"><svg width="16" height="16"><path d="M0 2.500l7-1v6H0zM8 1.300L16 0v7.500H8zM0 8.500h7v6l-7-1zM8 8.500h8V16l-8-1.300z" fill="#fff"/></svg></button>
 <div class="tsearch d-flex align-items-center"><svg width="24" height="24" class="ringo"><circle cx="12" cy="12" r="9" fill="none" stroke="#fff" stroke-width="3"/></svg><input class="flex-fill" type="text" placeholder="在这里输入你要搜索的内容" aria-label="搜索"><svg width="14" height="18" class="me-3" viewBox="0 0 14 18"><path d="M4.500 1.500h5v10h-5zM2 9v4.500h10V9M7 14v3M4 16.500h6" fill="none" stroke="#aaa"/></svg></div>
 <button class="tile" aria-label="浏览器"><svg class="ic" viewBox="0 0 24 24"><g fill="#e6e6e6"><path id="pt" d="M11 11L2 10Q1 2 7 1q6 0 5 8z"/><use href="#pt" transform="rotate(90 12 12)"/><use href="#pt" transform="rotate(180 12 12)"/><use href="#pt" transform="rotate(270 12 12)"/></g></svg></button>
 <button class="tile" aria-label="安全"><svg class="ic" viewBox="0 0 24 24"><path d="M21 3Q8 0 4 9q-2 10 8 12 8-1 8-8-3-6-9-3-3 5 2 6 4-1 3-4M18 5Q9 3 7 10q-1 8 6 8" fill="none" stroke="#ccc" stroke-width="1.500"/></svg></button>
 <span class="tsplit align-self-center border-start border-end border-secondary ms-3"></span>
 <button class="tile" aria-label="Edge"><svg class="ic" viewBox="0 0 24 24"><path d="M2 11Q4 1 13 2t9 12H8q2 6 12 3v4Q8 25 5 16q-1-6 5-9-7 0-8 4zM8 11h8q-1-4-4-4t-4 4z" fill="#0a78d6"/></svg></button>
 <button class="tile" aria-label="商店"><svg class="ic" viewBox="0 0 24 24"><path d="M2 6l20-1v18l-20-3z" fill="#fff"/><path d="M8 6q0-5 4-5t4 5" fill="none" stroke="#fff" stroke-width="1.500"/><path d="M6 10h4v3.500H6zM11.500 10h5v3.500h-5zM6 15h4v3.500H6zM11.500 15h5v4h-5z" fill="#020c10"/></svg></button>
 <button class="tile run" aria-label="文件资源管理器"><svg class="ic" viewBox="0 0 24 24"><path d="M2 4h8l1 2h11v15H2z" fill="#ffe08a"/><path d="M3 6h7" stroke="#e0a838" stroke-width="2"/><path d="M6 22v-7h13v7h-4v-4h-5v4z" fill="#38a8e0"/></svg></button>
 <button class="tile run" aria-label="写字"><svg class="ic" viewBox="0 0 24 24"><rect width="24" height="24" rx="2" fill="#f59a12"/><rect x="2" y="2" width="20" height="20" fill="#ffc94a"/><path d="M3 7l12-2 3 13-11 3z" fill="#fff"/><path d="M6 10l8-1M7 13l8-1M8 16l7-1" stroke="#999"/><path d="M22 2l-9 12" stroke="#7b2d08" stroke-width="3"/></svg></button>
 <button class="tile act" aria-label="GGJ2013"><svg class="ic"><use href="#app"/></svg></button>
 <button class="tile run" aria-label="云"><svg class="ic" viewBox="0 0 24 24"><path d="M23 2Q17 5 12 1 1 4 1 14q2 10 12 9 9-2 8-11h-8q2 2 4 3-3 5-7 2-4-5 1-9 5-4 12-6z" fill="#1c9cf0"/></svg></button>
 <button class="tile run" aria-label="360浏览器"><svg class="ic" viewBox="0 0 24 24"><circle cx="12" cy="12" r="10" fill="#54b82c" stroke="#e8f4e0" stroke-width="2"/><path d="M6 12h12q-1-6-6-6t-6 6zM7 15h10q-5 6-10 0" fill="#fff"/><path d="M9 10h6" stroke="#54b82c" stroke-width="2"/></svg></button>
 <button class="tile run" aria-label="帮助"><svg class="ic" viewBox="0 0 24 24"><path d="M4 10h8v11H4z" fill="#eee"/><path d="M6 13h4M6 16h4M6 19h4" stroke="#555"/><path d="M12 6q0-3 3-3 4 0 3 4-1 2-3 3v2M15 14v3" fill="none" stroke="#ff0" stroke-width="3"/></svg></button>
 <div class="ms-auto d-flex align-items-center text-center tray gap-2"><div class="cpu me-2">45%<br>CPU使用</div>
 <svg class="ic" viewBox="0 0 16 16"><path d="M2 11l6-6 6 6" fill="none" stroke="#fff" stroke-width="1.500"/></svg><svg class="ic" viewBox="0 0 16 16"><rect width="16" height="16" fill="#3a3f44"/><path d="M1 8q6-7 14-2v6q-8 3-14-4z" fill="#76b900"/><circle cx="8" cy="8" r="2" fill="none" stroke="#234"/></svg><svg class="ic" viewBox="0 0 16 16"><path d="M5 5.500h9v7H5zM15 7v4M1 3v4h3V3M2.500 7v5H5M1 1v2M4 1v2" fill="none" stroke="#fff"/><path d="M7 7h6v4H7z" fill="#fff"/></svg><svg class="ic" viewBox="0 0 16 16"><path d="M1 12Q3 3 14 3M4 14Q5 6 14 6M7 14q1-5 7-5M10 14q1-2 4-2" fill="none" stroke="#ddd"/></svg><svg class="ic" viewBox="0 0 16 16"><path d="M1 6h3l4-4v12l-4-4H1zM10 5q2 3 0 6M12 4q3 4 0 8M14 2q3 6 0 12" fill="none" stroke="#fff"/></svg><span class="zh">中</span><svg class="ic mx-1"><use href="#sogou"/></svg><div class="clock">15:52<br>2017/7/20</div>
 <button class="tile note" aria-label="通知"><svg width="26" height="28" viewBox="0 0 26 28"><path d="M1 4h16v13H8l-4 4v-4H1z" fill="#fff"/><path d="M4 8h10M4 11h10M4 14h6" stroke="#000"/><circle cx="16" cy="19" r="8" fill="#333" stroke="#bbb"/><text x="16" y="24" font-size="13" font-weight="700" text-anchor="middle" fill="#fff">2</text></svg></button></div>
</div>
</body>
</html>
